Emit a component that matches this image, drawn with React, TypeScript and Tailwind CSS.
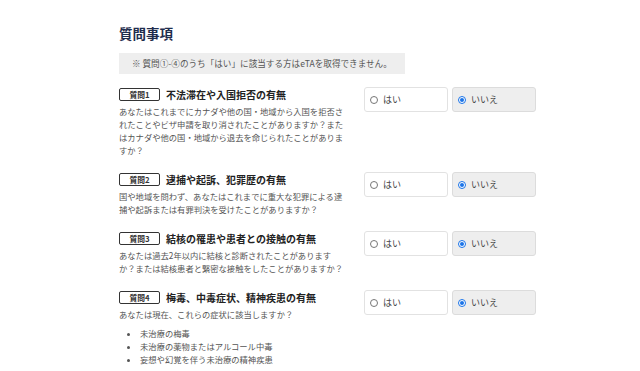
import React from "react";

type Question = {
  no: number;
  title: string;
  body: string;
  items?: string[];
};

const questions: Question[] = [
  {
    no: 1,
    title: "不法滞在や入国拒否の有無",
    body: "あなたはこれまでにカナダや他の国・地域から入国を拒否されたことやビザ申請を取り消されたことがありますか？またはカナダや他の国・地域から退去を命じられたことがありますか？",
  },
  {
    no: 2,
    title: "逮捕や起訴、犯罪歴の有無",
    body: "国や地域を問わず、あなたはこれまでに重大な犯罪による逮捕や起訴または有罪判決を受けたことがありますか？",
  },
  {
    no: 3,
    title: "結核の罹患や患者との接触の有無",
    body: "あなたは過去2年以内に結核と診断されたことがありますか？または結核患者と緊密な接触をしたことがありますか？",
  },
  {
    no: 4,
    title: "梅毒、中毒症状、精神疾患の有無",
    body: "あなたは現在、これらの症状に該当しますか？",
    items: ["未治療の梅毒", "未治療の薬物またはアルコール中毒", "妄想や幻覚を伴う未治療の精神疾患"],
  },
];

const RadioBox = ({ label, checked }: { label: string; checked: boolean }) => (
  <div
    className={`flex h-[25px] w-[84px] items-center gap-[5px] rounded-[3px] border px-[5px] ${
      checked ? "border-[#dcdcdc] bg-[#eeeeee]" : "border-[#e2e2e2] bg-white"
    }`}
  >
    {checked ? (
      <span className="flex h-[8px] w-[8px] items-center justify-center rounded-full border border-[#1a73e8] bg-white">
        <span className="h-[4px] w-[4px] rounded-full bg-[#1a73e8]" />
      </span>
    ) : (
      <span className="h-[8px] w-[8px] rounded-full border border-[#767676] bg-white" />
    )}
    <span className="text-[9px] text-[#444]">{label}</span>
  </div>
);

export default function App() {
  return (
    <div
      className="min-h-[371px] bg-white text-[#444]"
      style={{ fontFamily: '"Noto Sans CJK JP", "Noto Sans", sans-serif' }}
    >
      <div className="ml-[119px] w-[418px] pt-[24px]">
        <h1 className="text-[13.5px] font-bold leading-[18px] text-[#1f2d4d]">質問事項</h1>
        <div className="mt-[11px] flex h-[21px] w-[286px] items-center bg-[#eeeeee] pl-[13px] text-[8.6px] text-[#555]">
          ※ 質問①-④のうち「はい」に該当する方はeTAを取得できません。
        </div>
        <div className="mt-[13px] flex flex-col gap-[15px]">
          {questions.map((q) => (
            <div key={q.no} className="flex">
              <div className="w-[245px] pt-[1px]">
                <div className="flex items-center gap-[6px]">
                  <span className="flex h-[13px] w-[41px] items-center justify-center rounded-[2px] border border-[#333] text-[7.8px] font-bold text-[#333]">
                    質問{q.no}
                  </span>
                  <span className="text-[10px] font-bold leading-[13px] text-[#222]">{q.title}</span>
                </div>
                <p className="mt-[4px] w-[226px] text-[8.3px] leading-[13px] text-[#555]">{q.body}</p>
                {q.items && (
                  <ul className="mt-[6px] list-disc pl-[21px] text-[8.3px] leading-[13px] text-[#555]">
                    {q.items.map((it) => (
                      <li key={it}>{it}</li>
                    ))}
                  </ul>
                )}
              </div>
              <div className="flex gap-[4px]">
                <RadioBox label="はい" checked={false} />
                <RadioBox label="いいえ" checked />
              </div>
            </div>
          ))}
        </div>
      </div>
    </div>
  );
}
